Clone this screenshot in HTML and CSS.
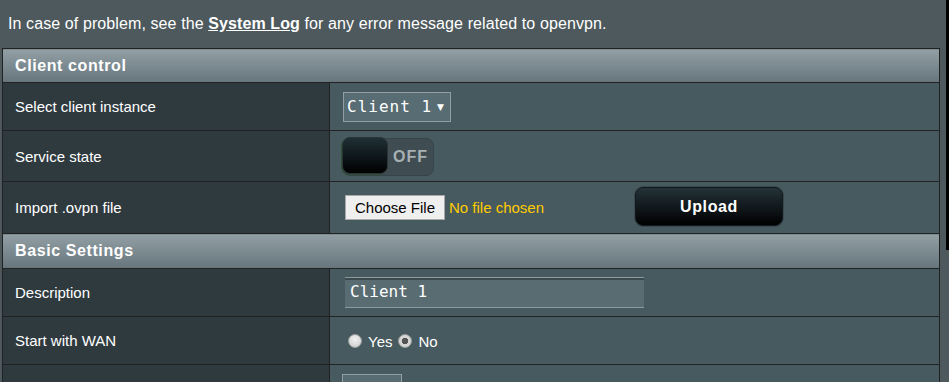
FILE: index.html
```html
<!DOCTYPE html>
<html>
<head>
<meta charset="utf-8">
<link rel="stylesheet" href="styles.css">
</head>
<body>
<div class="page">
  <div class="main">
    <p class="note">In case of problem, see the <a class="link" href="#">System Log</a> for any error message related to openvpn.</p>
    <table class="form">
      <tr class="head h33"><td colspan="2">Client control</td></tr>
      <tr class="h47">
        <th>Select client instance</th>
        <td><div class="select">Client 1<span class="arrow">▼</span></div></td>
      </tr>
      <tr class="h50">
        <th>Service state</th>
        <td><div class="toggle"><span class="knob"></span><span class="off">OFF</span></div></td>
      </tr>
      <tr class="h51">
        <th>Import .ovpn file</th>
        <td>
          <div class="filerow">
            <div class="file"><button class="choose" type="button">Choose File</button><span class="nofile">No file chosen</span></div>
            <button class="upload" type="button">Upload</button>
          </div>
        </td>
      </tr>
      <tr class="head h34"><td colspan="2">Basic Settings</td></tr>
      <tr class="h47">
        <th>Description</th>
        <td><div class="text-input">Client 1</div></td>
      </tr>
      <tr class="h47">
        <th>Start with WAN</th>
        <td>
          <div class="radios">
            <span class="radio"></span><span class="rlabel">Yes</span>
            <span class="radio checked"></span><span class="rlabel">No</span>
          </div>
        </td>
      </tr>
      <tr class="h47">
        <th></th>
        <td><div class="small-box"></div></td>
      </tr>
    </table>
  </div>
  <div class="edge"></div>
</div>
</body>
</html>
```

FILE: styles.css
```css
body {
  margin: 0;
  background: #4D595D;
  font-family: "Liberation Sans", Arial, sans-serif;
  color: #fff;
  overflow: hidden;
}
.page {
  display: flex;
  width: 949px;
}
.main {
  width: 946px;
}
.edge {
  width: 3px;
  height: 250px;
  background: #000;
  align-self: flex-start;
}
.note {
  margin: 0 0 14px;
  padding: 14px 0 0 8px;
  font-size: 16px;
  line-height: 20px;
  letter-spacing: 0.1px;
}
.link {
  color: #fff;
  font-weight: bold;
  text-decoration: underline;
}
.form {
  border-collapse: collapse;
  margin-left: 2px;
  width: 938px;
}
.form th,
.form td {
  border: 1px solid #222;
  padding: 0;
}
.form th {
  width: 314px;
  padding-left: 12px;
  background: #2F3A3F;
  text-align: left;
  font-weight: normal;
  font-size: 15px;
}
.form td {
  background: #475A5F;
  padding-left: 12px;
  font-size: 15px;
}
.form .head td {
  background: linear-gradient(#92A0A5, #66757C);
  font-weight: bold;
  font-size: 16px;
  letter-spacing: 0.6px;
  padding-left: 12px;
}
.h33 td, .h33 th { height: 33px; }
.h34 td, .h34 th { height: 34px; }
.h47 td, .h47 th { height: 47px; }
.h50 td, .h50 th { height: 50px; }
.h51 td, .h51 th { height: 51px; }

.select {
  display: inline-flex;
  align-items: center;
  box-sizing: border-box;
  width: 108px;
  height: 30px;
  margin-left: 1px;
  padding-left: 3px;
  background: #576D73;
  border: 1px solid #929EA1;
  font-family: "DejaVu Sans Mono", monospace;
  font-size: 16px;
  letter-spacing: 1px;
  color: #fff;
}
.arrow {
  font-family: "DejaVu Sans", sans-serif;
  font-size: 9px;
  margin-left: 5px;
  letter-spacing: 0;
}
.toggle {
  display: flex;
  align-items: center;
  box-sizing: border-box;
  width: 92px;
  height: 38px;
  margin-top: 1px;
  border-radius: 8px;
  background: #3F4C51;
  border: 1px solid #37444A;
}
.knob {
  box-sizing: border-box;
  width: 46px;
  height: 37px;
  margin-left: -1px;
  margin-top: -2px;
  border-radius: 8px;
  background: linear-gradient(#1F2F36, #000);
  border: 1px solid #2A3439;
  box-shadow: -1px 1px 0 #2f4f33;
}
.off {
  margin-left: 5px;
  font-weight: bold;
  font-size: 16px;
  letter-spacing: 1px;
  color: #A7B0B3;
}
.filerow {
  display: flex;
  align-items: center;
}
.file {
  display: flex;
  align-items: center;
  width: 290px;
  margin-left: 3px;
}
.choose {
  box-sizing: border-box;
  width: 100px;
  height: 25px;
  padding: 0;
  background: #EFEFEF;
  border: 1px solid #A9A9A9;
  border-radius: 0;
  font-family: "Liberation Sans", Arial, sans-serif;
  font-size: 15px;
  color: #000;
}
.nofile {
  margin-left: 4px;
  color: #FFCC00;
  font-size: 15px;
}
.upload {
  box-sizing: border-box;
  width: 148px;
  height: 39px;
  margin-top: -2px;
  border-radius: 8px;
  background: linear-gradient(#233239, #000);
  border: 1px solid #111a1e;
  box-shadow: 0 0 0 1px #3B484D;
  color: #fff;
  font-family: "Liberation Sans", Arial, sans-serif;
  font-weight: bold;
  font-size: 16px;
  letter-spacing: 0.6px;
  padding-top: 2px;
}
.text-input {
  box-sizing: border-box;
  width: 299px;
  height: 31px;
  margin-left: 3px;
  padding: 3px 0 0 5px;
  background: #596C72;
  border-top: 1px solid #8D9B9F;
  border-bottom: 1px solid #8D9B9F;
  box-shadow: inset 0 2px 0 #3B4A4F;
  font-family: "DejaVu Sans Mono", monospace;
  font-size: 16px;
  line-height: 22px;
  color: #fff;
}
.radios {
  display: flex;
  align-items: center;
  margin-left: 6px;
  padding-top: 1px;
}
.radio {
  box-sizing: border-box;
  width: 14px;
  height: 14px;
  border-radius: 50%;
  background: radial-gradient(circle at 50% 35%, #f2f2f2, #c9c9c9);
  border: 1px solid #9a9a9a;
}
.radio.checked {
  background: radial-gradient(circle, #555 0 3px, #d5d5d5 3.5px);
}
.rlabel {
  margin-left: 6px;
  margin-right: 6px;
  font-size: 15px;
}
.small-box {
  box-sizing: border-box;
  width: 60px;
  height: 30px;
  background: #576D73;
  border: 1px solid #929EA1;
}
```
